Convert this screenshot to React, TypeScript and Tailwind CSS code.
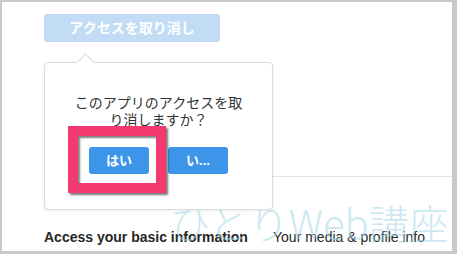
import React from "react";

const jp = { fontFamily: '"Liberation Sans", "Noto Sans CJK JP", sans-serif' };

export default function App() {
  return (
    <div
      className="relative w-[457px] h-[254px] overflow-hidden bg-white border-l-2 border-t-2 border-r-[5px] border-b-[3px] border-[#c9c9c9]"
      style={jp}
    >
      <div className="flex flex-col pl-[42px] pt-[12px] h-full">
        <button className="w-[176px] h-[28px] rounded-[3px] bg-[#c2dcf6] text-white text-[14px] font-bold leading-[28px]">
          アクセスを取り消し
        </button>
        <div className="mt-[134px] h-px bg-[#e3e3e3] mr-0" />
        <div className="mt-[50px] grid grid-cols-[229px_1fr] text-[14px] leading-[20px] text-[#262626]">
          <div className="font-bold">Access your basic information</div>
          <div>Your media &amp; profile info</div>
        </div>
      </div>

      {/* watermark */}
      <div
        className="absolute left-[168px] top-[196px] text-[40px] leading-[48px] font-light text-[#a6d6e8] opacity-55 pointer-events-none whitespace-nowrap"
        style={{ fontFamily: '"Noto Sans CJK JP", sans-serif' }}
      >
        ひとりWeb講座
      </div>

      {/* popover */}
      <div className="absolute left-[42px] top-[60px] w-[229px] h-[148px] bg-white border border-[#dcdcdc] rounded-[4px] shadow-[0_1px_3px_rgba(0,0,0,0.08)]">
        <div className="absolute left-[34px] top-[-7px] w-[13px] h-[13px] rotate-45 bg-white border-l border-t border-[#dcdcdc]" />
        <div className="flex flex-col items-center pt-[32px]">
          <p className="text-[14px] leading-[17px] text-[#333] text-center w-[180px]">
            このアプリのアクセスを取り消しますか？
          </p>
          <div className="flex gap-[19px] mt-[18px]">
            <button className="w-[60px] h-[27px] rounded-[3px] bg-[#3d95e9] text-white text-[13px] font-bold">
              はい
            </button>
            <button className="w-[60px] h-[27px] rounded-[3px] bg-[#3d95e9] text-white text-[13px] font-bold">
              い...
            </button>
          </div>
        </div>
      </div>

      {/* highlight annotation */}
      <div className="absolute left-[66px] top-[124px] w-[98px] h-[67px] border-[10px] border-[#f23a71] shadow-[2px_2px_2px_rgba(0,0,0,0.55),inset_2px_2px_2px_rgba(0,0,0,0.5)]" />
    </div>
  );
}
